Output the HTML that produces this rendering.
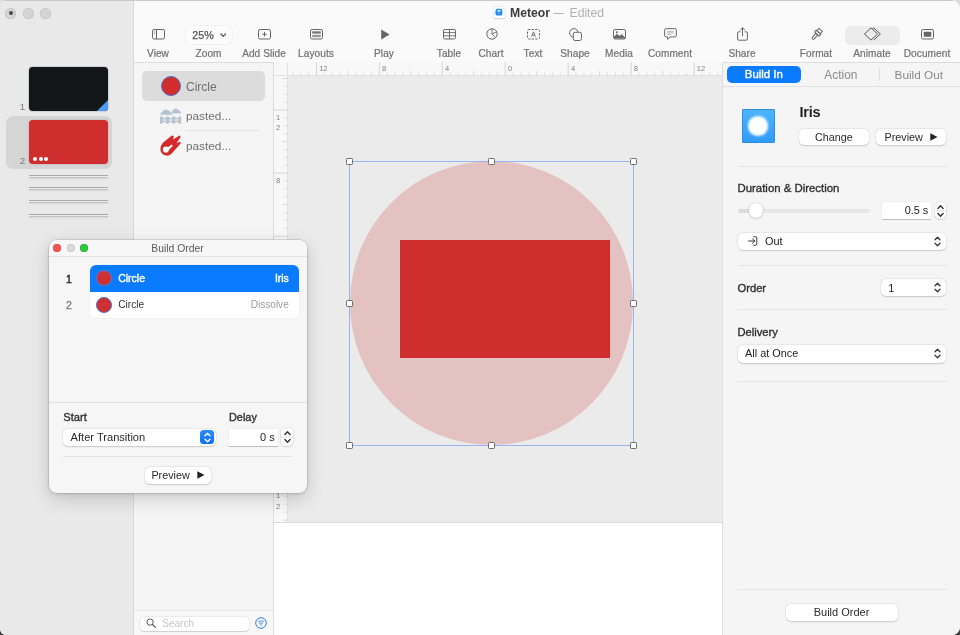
<!DOCTYPE html>
<html>
<head>
<meta charset="utf-8">
<title>Keynote</title>
<style>
*{box-sizing:border-box;margin:0;padding:0}
html,body{width:960px;height:635px;overflow:hidden;background:linear-gradient(#dedede 0,#dedede 50%,#3a3c3c 50%,#3a3c3c 100%);font-family:"Liberation Sans",sans-serif;}
#win{position:absolute;left:0;top:0;width:960px;height:635px;background:#ebebeb;border-radius:6px 9px 8px 6px;overflow:hidden;will-change:transform}
.abs{position:absolute}
.t{position:absolute;white-space:nowrap;line-height:1}
/* regions */
#nav{left:0;top:0;width:134px;height:635px;background:#e9e9e9;border-right:1px solid #d9d9d9}
#tb{left:134px;top:0;width:826px;height:63px;background:#fafafa;border-bottom:1px solid #dcdcdc}
#topline{left:0;top:0;width:960px;height:1px;background:#c9c9c9}
#objs{left:134px;top:63px;width:140px;height:572px;background:#f5f5f5;border-right:1px solid #dcdcdc}
#hr{left:274px;top:62px;width:449px;height:14px;background:#f8f8f8;border-bottom:1px solid #e2e2e2}
#vr{left:274px;top:76px;width:14px;height:447px;background:#f8f8f8;border-right:1px solid #e2e2e2}
#canvas{left:288px;top:76px;width:435px;height:447px;background:#ebebeb}
#notes{left:274px;top:522px;width:449px;height:113px;background:#fff;border-top:1px solid #dcdcdc}
#insp{left:722px;top:63px;width:238px;height:572px;background:#f5f5f5;border-left:1px solid #dedede}
.lbl{font-size:10.100px;letter-spacing:.06px;color:#707070;-webkit-text-stroke:.2px #707070;transform:translateX(-50%);top:49.100px}
.sep{position:absolute;height:1px;background:#e3e3e3}
.btn{position:absolute;background:#fff;border-radius:5px;box-shadow:0 0 0 .5px rgba(0,0,0,.05),0 .5px 1.500px rgba(0,0,0,.17);font-size:12px;color:#2a2a2a;text-align:center}
.h{position:absolute;width:6.400px;height:6.400px;background:#fff;border:1.200px solid #707070;border-radius:1.200px}
</style>
</head>
<body>
<div id="win">
  <div id="nav" class="abs"></div>
  <div id="tb" class="abs"></div>
  <div id="objs" class="abs"></div>
  <div id="hr" class="abs"></div>
  <div id="vr" class="abs"></div>
  <div id="canvas" class="abs"></div>
  <div id="notes" class="abs"></div>
  <div id="insp" class="abs"></div>
  <div id="topline" class="abs"></div>

  <!-- traffic lights (inactive) -->
  <div class="abs" style="left:5px;top:7.500px;width:11px;height:11px;border-radius:50%;background:#d4d4d4;box-shadow:inset 0 0 0 .5px #bdbdbd"></div>
  <div class="abs" style="left:8.500px;top:11px;width:4px;height:4px;border-radius:50%;background:#4a4a4a"></div>
  <div class="abs" style="left:22.500px;top:7.500px;width:11px;height:11px;border-radius:50%;background:#d4d4d4;box-shadow:inset 0 0 0 .5px #c3c3c3"></div>
  <div class="abs" style="left:40px;top:7.500px;width:11px;height:11px;border-radius:50%;background:#d4d4d4;box-shadow:inset 0 0 0 .5px #c3c3c3"></div>

  <!-- slide navigator -->
  <div class="abs" style="left:29px;top:67px;width:79px;height:44px;border-radius:4px;background:#131617;box-shadow:0 0 1.5px rgba(0,0,0,.5);overflow:hidden">
    <div class="abs" style="right:0;bottom:0;width:0;height:0;border-left:11px solid transparent;border-bottom:11px solid #4a9cf8"></div>
  </div>
  <div class="t" style="left:19.800px;top:102px;font-size:9.800px;color:#7a7a7a">1</div>
  <div class="abs" style="left:6.300px;top:116px;width:105.700px;height:52.600px;border-radius:7px;background:#d5d5d5"></div>
  <div class="abs" style="left:29px;top:120px;width:79px;height:44px;border-radius:4px;background:#cf2e2e;box-shadow:0 0 1.5px rgba(120,0,0,.4)"></div>
  <div class="t" style="left:19.800px;top:156px;font-size:9.800px;color:#7a7a7a">2</div>
  <div class="abs" style="left:33px;top:157px;width:4px;height:4px;border-radius:50%;background:#fff"></div>
  <div class="abs" style="left:38.5px;top:157px;width:4px;height:4px;border-radius:50%;background:#fff"></div>
  <div class="abs" style="left:44px;top:157px;width:4px;height:4px;border-radius:50%;background:#fff"></div>
  <div class="abs cl" style="top:174.600px"></div>
  <div class="abs cl" style="top:187.400px"></div>
  <div class="abs cl" style="top:200.400px"></div>
  <div class="abs cl" style="top:213.600px"></div>
  <style>.cl{left:29px;width:79px;height:1px;background:#a9a9a9;box-shadow:0 1px 0 #ededed,0 2px 1px rgba(0,0,0,.2),0 3px 2px rgba(0,0,0,.08)}</style>

  <!-- TOOLBAR -->

  <!-- title -->
  <svg class="abs" style="left:492px;top:4px" width="15" height="17" viewBox="0 0 15 17"><path d="M2 2.300h7.600l3.400 3.300v8.900h-11z" fill="#fff" stroke="#dedede" stroke-width=".7"/><path d="M2 14.700h11" stroke="#d2d2d2" stroke-width=".8"/><rect x="3.500" y="4.800" width="6.800" height="6.800" rx="1.900" fill="#1a86f8"/><rect x="5.200" y="6.100" width="3.400" height="1.500" rx=".3" fill="#e8f0fb"/><rect x="6.600" y="7.600" width=".6" height="2.800" fill="#cfe0f8"/></svg>
  <div class="t" style="left:510px;top:6.700px;font-size:12.200px;font-weight:bold;color:#3c3c3c">Meteor</div>
  <div class="t" style="left:554px;top:7px;font-size:12px;color:#a9a9a9;transform:scaleX(.8);transform-origin:0 0">—</div>
  <div class="t" style="left:569.500px;top:7px;font-size:12.200px;color:#b0b0b0">Edited</div>

  <!-- zoom button / animate highlight -->
  <div class="abs" style="left:185.700px;top:26px;width:46.600px;height:18.400px;border-radius:4.500px;background:#fcfcfc;box-shadow:0 0 0 .5px rgba(0,0,0,.07)"></div>
  <div class="t" style="left:192.300px;top:30.200px;font-size:10.700px;color:#555;-webkit-text-stroke:.25px #555">25%</div>
  <svg class="abs" style="left:219.700px;top:32.600px" width="6.500" height="4.600" viewBox="0 0 6.500 4.600"><path d="M.9 .9l2.350 2.500 2.350-2.500" fill="none" stroke="#606060" stroke-width="1.400" stroke-linecap="round" stroke-linejoin="round"/></svg>
  <div class="abs" style="left:845px;top:25.500px;width:54.500px;height:19.500px;border-radius:5px;background:#ececec"></div>

  <!-- icons -->
  <svg class="abs" style="left:152.0px;top:29.4px" width="13" height="10.500" viewBox="0 0 13 10.500"><rect x=".5" y=".5" width="12" height="9.500" rx="1.600" fill="none" stroke="#666" stroke-width="1"/><path d="M4.500 .5v9.500" stroke="#666" stroke-width="1"/><path d="M2 2.800h1.200M2 4.400h1.200" stroke="#666" stroke-width=".7"/></svg>
  <svg class="abs" style="left:258.0px;top:29.4px" width="13" height="10.500" viewBox="0 0 13 10.500"><rect x=".5" y=".5" width="12" height="9.500" rx="1.600" fill="none" stroke="#666" stroke-width="1"/><path d="M6.500 3v4.500M4.250 5.250h4.500" stroke="#666" stroke-width="1"/></svg>
  <svg class="abs" style="left:310.0px;top:29.4px" width="13" height="10.500" viewBox="0 0 13 10.500"><rect x=".5" y=".5" width="12" height="9.500" rx="1.600" fill="none" stroke="#666" stroke-width="1"/><rect x="2.200" y="2.300" width="8.600" height="2.300" fill="#777"/><rect x="2.200" y="5.800" width="8.600" height="2.400" fill="#999"/></svg>
  <svg class="abs" style="left:380px;top:28.9px" width="10" height="11" viewBox="0 0 10 11"><path d="M1.200 .9v9.200a.3.300 0 0 0 .45.260l7.500-4.600a.3.300 0 0 0 0-.52l-7.500-4.600a.3.300 0 0 0-.45.260z" fill="#666"/></svg>
  <svg class="abs" style="left:443.0px;top:29.4px" width="13" height="10.500" viewBox="0 0 13 10.500"><rect x=".5" y=".5" width="12" height="9.500" rx="1.600" fill="none" stroke="#666" stroke-width="1"/><path d="M.5 3.600h12M.5 6.800h12M6.500 .5v9.500" stroke="#666" stroke-width=".9"/></svg>
  <svg class="abs" style="left:485.500px;top:28.4px" width="12" height="12" viewBox="0 0 12 12"><circle cx="6" cy="6" r="5.200" fill="none" stroke="#666" stroke-width="1"/><path d="M6 .8v5.200l3.600 3.600M6 6l4.700-2.200" fill="none" stroke="#666" stroke-width=".9"/></svg>
  <svg class="abs" style="left:526.500px;top:29.4px" width="13" height="10.500" viewBox="0 0 13 10.500"><rect x=".5" y=".5" width="12" height="9.500" rx="1.600" fill="none" stroke="#666" stroke-width="1" stroke-dasharray="2.300 1.200" stroke-dashoffset="1"/><path d="M4.600 7.700l1.900-4.900 1.900 4.900M5.250 6.200h2.500" fill="none" stroke="#666" stroke-width=".9"/></svg>
  <svg class="abs" style="left:568.500px;top:27.9px" width="13" height="13" viewBox="0 0 13 13"><circle cx="4.800" cy="4.800" r="4.200" fill="none" stroke="#666" stroke-width="1"/><rect x="4.300" y="4.300" width="8.200" height="8.200" rx="1.800" fill="#fafafa" stroke="#666" stroke-width="1"/></svg>
  <svg class="abs" style="left:613.0px;top:29.4px" width="13" height="10.500" viewBox="0 0 13 10.500"><rect x=".5" y=".5" width="12" height="9.500" rx="1.600" fill="none" stroke="#666" stroke-width="1"/><path d="M.8 9.500v-1.800l3.300-3 2.400 2.200 2-1.700 3.700 3.200v1.100z" fill="#666"/><circle cx="3.800" cy="3.200" r="1" fill="#666"/></svg>
  <svg class="abs" style="left:664px;top:27.9px" width="13" height="13" viewBox="0 0 13 13"><path d="M2.300 .6h8.400a1.700 1.700 0 0 1 1.700 1.700v4.900a1.700 1.700 0 0 1-1.700 1.700h-4.500l-2.500 2.500v-2.500h-1.400a1.700 1.700 0 0 1-1.700-1.700v-4.900a1.700 1.700 0 0 1 1.700-1.700z" fill="none" stroke="#666" stroke-width="1" stroke-linejoin="round"/><path d="M3.200 3.300h6.600M3.200 4.900h6.600M3.200 6.500h3.800" stroke="#999" stroke-width=".7"/></svg>
  <svg class="abs" style="left:736.500px;top:26.9px" width="11" height="14" viewBox="0 0 11 14"><path d="M3.300 4.800h-1.500a1.200 1.200 0 0 0-1.200 1.200v6a1.200 1.200 0 0 0 1.200 1.200h7.400a1.200 1.200 0 0 0 1.200-1.200v-6a1.200 1.200 0 0 0-1.200-1.200h-1.500" fill="none" stroke="#666" stroke-width="1"/><path d="M5.500 8.800v-7.800M3.300 3l2.200-2.200 2.200 2.200" fill="none" stroke="#666" stroke-width="1" stroke-linecap="round" stroke-linejoin="round"/></svg>
  <svg class="abs" style="left:809px;top:26.9px" width="15" height="15" viewBox="0 0 15 15"><g transform="rotate(42 7.500 7.500)" fill="none" stroke="#666" stroke-width="1" stroke-linejoin="round"><path d="M5.200 1.200h4.600v3.300h-4.600z"/><path d="M4.300 4.500h6.400v2.500h-6.400z"/><path d="M6.300 7h2.400v5.200a1.200 1.200 0 0 1-2.400 0z"/></g></svg>
  <svg class="abs" style="left:862.500px;top:26.9px" width="20" height="14" viewBox="0 0 20 14"><path d="M10.800 1l6.600 6-6.600 6" fill="none" stroke="#555" stroke-width="1" stroke-linejoin="round"/><path d="M9.300 2.300l1.500-1.300" fill="none" stroke="#555" stroke-width="1"/><path d="M8 .9l6.500 6.100-6.500 6.100-6.500-6.100z" fill="#ececec" stroke="#555" stroke-width="1" stroke-linejoin="round"/></svg>
  <svg class="abs" style="left:921.0px;top:29.4px" width="13" height="10.500" viewBox="0 0 13 10.500"><rect x=".5" y=".5" width="12" height="9.500" rx="1.600" fill="none" stroke="#666" stroke-width="1"/><rect x="2.800" y="2.800" width="7.400" height="4.900" rx=".5" fill="#666"/></svg>

  <!-- labels -->
  <div class="t lbl" style="left:158px">View</div>
  <div class="t lbl" style="left:208.500px">Zoom</div>
  <div class="t lbl" style="left:264px">Add Slide</div>
  <div class="t lbl" style="left:316px">Layouts</div>
  <div class="t lbl" style="left:384px">Play</div>
  <div class="t lbl" style="left:449px">Table</div>
  <div class="t lbl" style="left:491px">Chart</div>
  <div class="t lbl" style="left:533px">Text</div>
  <div class="t lbl" style="left:575px">Shape</div>
  <div class="t lbl" style="left:619px">Media</div>
  <div class="t lbl" style="left:670px">Comment</div>
  <div class="t lbl" style="left:742px">Share</div>
  <div class="t lbl" style="left:816px">Format</div>
  <div class="t lbl" style="left:872px">Animate</div>
  <div class="t lbl" style="left:927px">Document</div>


  <!-- OBJECT LIST -->
  <div class="abs" style="left:142px;top:71px;width:123px;height:30px;border-radius:5px;background:#dcdcdc"></div>
  <div class="abs" style="left:161px;top:76px;width:20px;height:20px;border-radius:50%;background:#d02d2d;border:1px solid #4f6dcf"></div>
  <div class="t" style="left:186px;top:80.700px;font-size:12px;color:#707070">Circle</div>
  <svg class="abs" style="left:160px;top:107.500px" width="22" height="16" viewBox="0 0 22 16"><g fill="#b7c3d0"><path d="M0 6.700c1.500-2.600 3.600-4.900 6-5.200 2.600.3 4.700 2.600 6.700 5.200z"/><path d="M11.300 4.600c1.200-2.400 2.600-3.900 4.400-4.100 2.200.2 4 2 5.500 4.600v.4h-8.400z"/><rect x="0" y="8.500" width="2.800" height="7.200"/><rect x="6.100" y="8.500" width="2.800" height="7.200"/><rect x="12.300" y="8.500" width="2.800" height="7.200"/><rect x="18.400" y="8.500" width="2.800" height="7.200"/><rect x="0" y="9.800" width="21" height="1.600"/><rect x="0" y="12.700" width="21" height="1.600"/></g></svg>
  <div class="t" style="left:186px;top:110.500px;font-size:11.800px;color:#707070">pasted...</div>
  <div class="sep" style="left:186px;top:130px;width:73px;background:#e2e2e2"></div>
  <svg class="abs" style="left:160.400px;top:135px" width="21" height="21" viewBox="0 0 21 21"><path d="M.4 13.800C.5 10.500 2.300 8 5 6L11.300 .9Q12.600 -.1 13.600 1Q14 1.600 13.600 2.600L13.100 4.400L18.600 .9Q19.800 .1 20.400 1.200Q20.700 2 20.100 2.900L16.400 8.200L19.200 6.900Q20.500 6.500 20.700 7.600Q20.800 8.400 20 9.300L12 18.300C10.500 19.900 8.600 20.800 6.400 20.600C2.900 20.300 .3 17.400 .4 13.800Z" fill="#d42a2c"/><circle cx="5.900" cy="14.600" r="3.100" fill="#f5f5f5"/><path d="M7.600 12.600L11.600 9.500L12.900 10.800L9.100 14.700z" fill="#f5f5f5"/><circle cx="9.200" cy="10.500" r=".75" fill="#d42a2c"/></svg>
  <div class="t" style="left:186px;top:140.500px;font-size:11.800px;color:#707070">pasted...</div>
  <div class="sep" style="left:134px;top:610px;width:139px;background:#e6e6e6"></div>
  <div class="abs" style="left:134px;top:611px;width:139px;height:24px;background:#f8f8f8"></div>
  <div class="abs" style="left:140px;top:616.500px;width:109px;height:14.300px;border-radius:4px;background:#fff;box-shadow:0 0 0 .5px rgba(0,0,0,.07),0 .5px 1px rgba(0,0,0,.14)"></div>
  <svg class="abs" style="left:145.500px;top:618.300px" width="10.500" height="10.500" viewBox="0 0 11 11"><circle cx="4.300" cy="4.300" r="3.300" fill="none" stroke="#4f4f4f" stroke-width="1"/><path d="M6.800 6.800l3 3" stroke="#4f4f4f" stroke-width="1.150" stroke-linecap="round"/></svg>
  <div class="t" style="left:162.300px;top:618.700px;font-size:10px;color:#c6c6c6">Search</div>
  <svg class="abs" style="left:255px;top:617px" width="12" height="12" viewBox="0 0 12 12"><circle cx="6" cy="6" r="5.300" fill="none" stroke="#2f7de0" stroke-width="1"/><path d="M3 4.200h6M3.900 6.100h4.200M4.900 8h2.200" stroke="#2f7de0" stroke-width=".8"/></svg>

  <!-- RULERS -->
  <div class="abs" style="left:287px;top:63px;width:1px;height:13px;background:#e2e2e2"></div>
  <svg class="abs" style="left:274px;top:62px" width="449" height="14" viewBox="0 0 449 14"><path d="M18.83 10.700v2.800M26.69 10.700v2.800M34.56 10.700v2.800M50.30 10.700v2.800M58.17 10.700v2.800M66.03 10.700v2.800M73.90 9v4.500M81.77 10.700v2.800M89.63 10.700v2.800M97.50 10.700v2.800M113.24 10.700v2.800M121.11 10.700v2.800M128.97 10.700v2.800M136.84 9v4.500M144.71 10.700v2.800M152.57 10.700v2.800M160.44 10.700v2.800M176.18 10.700v2.800M184.05 10.700v2.800M191.91 10.700v2.800M199.78 9v4.500M207.65 10.700v2.800M215.51 10.700v2.800M223.38 10.700v2.800M239.12 10.700v2.800M246.99 10.700v2.800M254.85 10.700v2.800M262.72 9v4.500M270.59 10.700v2.800M278.46 10.700v2.800M286.32 10.700v2.800M302.06 10.700v2.800M309.92 10.700v2.800M317.79 10.700v2.800M325.66 9v4.500M333.53 10.700v2.800M341.39 10.700v2.800M349.26 10.700v2.800M365.00 10.700v2.800M372.87 10.700v2.800M380.73 10.700v2.800M388.60 9v4.500M396.47 10.700v2.800M404.34 10.700v2.800M412.20 10.700v2.800M427.94 10.700v2.800M435.81 10.700v2.800M443.67 10.700v2.800" stroke="#d9d9d9" stroke-width="1" fill="none"/><path d="M42.43 0v13.500M105.37 0v13.500M168.31 0v13.500M231.25 0v13.500M294.19 0v13.500M357.13 0v13.500M420.07 0v13.500" stroke="#d6d6d6" stroke-width="1" fill="none"/><g font-family="Liberation Sans, sans-serif" font-size="7.600" fill="#828282"><text x="45.13" y="8.700">12</text><text x="108.07" y="8.700">8</text><text x="171.01" y="8.700">4</text><text x="233.95" y="8.700">0</text><text x="296.89" y="8.700">4</text><text x="359.83" y="8.700">8</text><text x="422.77" y="8.700">12</text></g></svg>
  <svg class="abs" style="left:274px;top:76px" width="14" height="447" viewBox="0 0 14 447"><path d="M8.500 2.49h5M10.700 10.38h2.800M10.700 18.26h2.800M10.700 26.15h2.800M10.700 41.92h2.800M10.700 49.81h2.800M10.700 57.69h2.800M8.500 65.58h5M10.700 73.47h2.800M10.700 81.35h2.800M10.700 89.24h2.800M10.700 105.01h2.800M10.700 112.90h2.800M10.700 120.78h2.800M8.500 128.67h5M10.700 136.55h2.800M10.700 144.44h2.800M10.700 152.33h2.800M10.700 168.10h2.800M10.700 175.98h2.800M10.700 183.87h2.800M8.500 191.76h5M10.700 199.64h2.800M10.700 207.53h2.800M10.700 215.41h2.800M10.700 231.19h2.800M10.700 239.07h2.800M10.700 246.96h2.800M8.500 254.84h5M10.700 262.73h2.800M10.700 270.62h2.800M10.700 278.50h2.800M10.700 294.27h2.800M10.700 302.16h2.800M10.700 310.05h2.800M8.500 317.93h5M10.700 325.82h2.800M10.700 333.70h2.800M10.700 341.59h2.800M10.700 357.36h2.800M10.700 365.25h2.800M10.700 373.13h2.800M8.500 381.02h5M10.700 388.91h2.800M10.700 396.79h2.800M10.700 404.68h2.800M10.700 420.45h2.800M10.700 428.34h2.800M10.700 436.22h2.800M8.500 444.11h5" stroke="#d9d9d9" stroke-width="1" fill="none"/><path d="M0 34.04h13.500M0 97.12h13.500M0 160.21h13.500M0 223.30h13.500M0 286.39h13.500M0 349.48h13.500M0 412.56h13.500" stroke="#d6d6d6" stroke-width="1" fill="none"/><g font-family="Liberation Sans, sans-serif" font-size="7.600" fill="#828282"><text x="2" y="43.94">1</text><text x="2" y="54.14">2</text><text x="2" y="107.02">8</text><text x="2" y="170.11">4</text><text x="2" y="233.20">0</text><text x="2" y="296.29">4</text><text x="2" y="359.38">8</text><text x="2" y="422.46">1</text><text x="2" y="432.66">2</text></g></svg>

  <!-- CANVAS CONTENT -->
  <div class="abs" style="left:349.500px;top:161.400px;width:283.800px;height:283.800px;border-radius:50%;background:#e5c2c2"></div>
  <div class="abs" style="left:400px;top:239.900px;width:210.300px;height:118.100px;background:#cf2e2e"></div>
  <div class="abs" style="left:348.950px;top:160.900px;width:284.900px;height:284.900px;border:1px solid #98b3f6"></div>
  <div class="h" style="left:346.25px;top:158.15px"></div>
  <div class="h" style="left:488.25px;top:158.15px"></div>
  <div class="h" style="left:630.25px;top:158.15px"></div>
  <div class="h" style="left:346.25px;top:300.15px"></div>
  <div class="h" style="left:630.25px;top:300.15px"></div>
  <div class="h" style="left:346.25px;top:442.15px"></div>
  <div class="h" style="left:488.25px;top:442.15px"></div>
  <div class="h" style="left:630.25px;top:442.15px"></div>


  <!-- INSPECTOR -->
  <div class="sep" style="left:723px;top:86px;width:237px;background:#e1e1e1"></div>
  <div class="abs" style="left:727px;top:66px;width:73.500px;height:17px;border-radius:5px;background:#0a7aff"></div>
  <div class="t" style="left:763.800px;top:69.300px;font-size:11.400px;-webkit-text-stroke:.4px #fff;color:#fff;transform:translateX(-50%)">Build In</div>
  <div class="t" style="left:840.900px;top:70px;font-size:11.900px;color:#8a8a8a;transform:translateX(-50%)">Action</div>
  <div class="abs" style="left:879px;top:69px;width:1px;height:11.500px;background:#dedede"></div>
  <div class="t" style="left:918.800px;top:70px;font-size:11.800px;color:#8a8a8a;transform:translateX(-50%)">Build Out</div>

  <div class="abs" style="left:742px;top:109.300px;width:33px;height:33.600px;background:linear-gradient(#4eb4fd,#309bf9);border:1px solid #2b8ce9;border-radius:1px;overflow:hidden"><div class="abs" style="left:5.400px;top:5.700px;width:19.600px;height:19.600px;border-radius:50%;background:#fff;filter:blur(1.300px)"></div></div>
  <div class="t" style="left:799.500px;top:105px;font-size:14.500px;font-weight:bold;color:#222;letter-spacing:-.2px">Iris</div>
  <div class="btn" style="left:799px;top:128.800px;width:70px;height:16.700px"></div>
  <div class="t" style="left:833.800px;top:131.600px;font-size:10.800px;color:#2a2a2a;transform:translateX(-50%)">Change</div>
  <div class="btn" style="left:876px;top:128.800px;width:70px;height:16.700px"></div>
  <div class="t" style="left:884.500px;top:131.600px;font-size:10.800px;color:#2a2a2a">Preview</div>
  <svg class="abs" style="left:930px;top:132.800px" width="8" height="8" viewBox="0 0 8 8"><path d="M.3 .3l7.200 3.700-7.200 3.700z" fill="#222"/></svg>
  <div class="sep" style="left:737.500px;top:165.500px;width:209px"></div>

  <div class="t" style="left:737.500px;top:182.500px;font-size:11.400px;-webkit-text-stroke:.35px #303030;color:#303030">Duration &amp; Direction</div>
  <div class="abs" style="left:737.500px;top:209px;width:132px;height:3.500px;border-radius:2px;background:#e8e8e8;box-shadow:inset 0 .5px .5px rgba(0,0,0,.04)"></div>
  <div class="abs" style="left:737.500px;top:209px;width:16px;height:3.500px;border-radius:2px;background:#dcdcdc"></div>
  <div class="abs" style="left:748.900px;top:203.400px;width:14.600px;height:14.600px;border-radius:50%;background:#fff;box-shadow:0 0 0 .5px rgba(0,0,0,.07),0 .5px 2px rgba(0,0,0,.22)"></div>
  <div class="abs" style="left:882px;top:202px;width:48.800px;height:17px;background:#fff;box-shadow:0 0 0 .5px rgba(0,0,0,.06),0 .8px .5px rgba(0,0,0,.2)"></div>
  <div class="t" style="left:928.300px;top:204.800px;font-size:10.900px;color:#222;transform:translateX(-100%)">0.5 s</div>
  <div class="abs" style="left:934.7px;top:201.7px;width:11.4px;height:17.6px;border-radius:4.500px;background:#fff;box-shadow:0 0 0 .5px rgba(0,0,0,.08),0 .5px 1.500px rgba(0,0,0,.2)"></div>
  <div class="abs" style="left:934.7px;top:210.1px;width:11.4px;height:.8px;background:#e6e6e6"></div>
  <svg class="abs" style="left:936.9px;top:203.7px" width="7" height="14" viewBox="0 0 7 14"><path d="M.9 4.500l2.600-2.700 2.600 2.700M.9 9.500l2.600 2.700 2.600-2.700" fill="none" stroke="#2e2e2e" stroke-width="1.350" stroke-linecap="round" stroke-linejoin="round"/></svg>
  <div class="btn" style="left:737.500px;top:232.500px;width:208.800px;height:17px"></div>
  <svg class="abs" style="left:748px;top:236.200px" width="10" height="10" viewBox="0 0 10 10"><path d="M.6 5h6M4.500 2.700l2.300 2.300-2.300 2.300" fill="none" stroke="#333" stroke-width="1" stroke-linecap="round" stroke-linejoin="round"/><path d="M5.400 .8h2.400a1 1 0 0 1 1 1v6.400a1 1 0 0 1-1 1h-2.400" fill="none" stroke="#333" stroke-width="1"/></svg>
  <div class="t" style="left:765px;top:235.700px;font-size:10.900px;color:#222">Out</div>
  <svg class="abs" style="left:934.2px;top:235.5px" width="7" height="11" viewBox="0 0 7 11"><path d="M1 3.800l2.500-2.600 2.500 2.600M1 7.200l2.500 2.600 2.500-2.600" fill="none" stroke="#3a3a3a" stroke-width="1.350" stroke-linecap="round" stroke-linejoin="round"/></svg>
  <div class="sep" style="left:737.500px;top:265px;width:209px"></div>

  <div class="t" style="left:737.500px;top:282.800px;font-size:11.200px;-webkit-text-stroke:.35px #303030;color:#303030">Order</div>
  <div class="btn" style="left:881px;top:279.300px;width:65.300px;height:17px"></div>
  <div class="t" style="left:888.300px;top:282.500px;font-size:10.900px;color:#222">1</div>
  <svg class="abs" style="left:934.2px;top:282.3px" width="7" height="11" viewBox="0 0 7 11"><path d="M1 3.800l2.500-2.600 2.500 2.600M1 7.200l2.500 2.600 2.500-2.600" fill="none" stroke="#3a3a3a" stroke-width="1.350" stroke-linecap="round" stroke-linejoin="round"/></svg>
  <div class="sep" style="left:737.500px;top:309px;width:209px"></div>

  <div class="t" style="left:737.500px;top:327.300px;font-size:11.200px;-webkit-text-stroke:.35px #303030;color:#303030">Delivery</div>
  <div class="btn" style="left:737.500px;top:345px;width:208.800px;height:17.500px"></div>
  <div class="t" style="left:745px;top:348.300px;font-size:10.900px;color:#222">All at Once</div>
  <svg class="abs" style="left:934.2px;top:348.3px" width="7" height="11" viewBox="0 0 7 11"><path d="M1 3.800l2.500-2.600 2.500 2.600M1 7.200l2.500 2.600 2.500-2.600" fill="none" stroke="#3a3a3a" stroke-width="1.350" stroke-linecap="round" stroke-linejoin="round"/></svg>
  <div class="sep" style="left:737.500px;top:381px;width:209px"></div>

  <div class="sep" style="left:737.500px;top:588.500px;width:209px"></div>
  <div class="btn" style="left:785.500px;top:604px;width:112.500px;height:17.300px"></div>
  <div class="t" style="left:841.500px;top:607px;font-size:11px;color:#2a2a2a;transform:translateX(-50%)">Build Order</div>


  <!-- BUILD ORDER WINDOW -->
  <div class="abs" style="left:49px;top:240px;width:258px;height:252.500px;border-radius:8px;background:#f6f6f6;box-shadow:0 0 0 .5px rgba(0,0,0,.17),0 6px 18px rgba(0,0,0,.17),0 1px 4px rgba(0,0,0,.10)"></div>
  <div class="abs" style="left:49px;top:240px;width:258px;height:17px;border-radius:8px 8px 0 0;background:#f7f7f7;border-bottom:1px solid #e2e2e2"></div>
  <div class="abs" style="left:53.400px;top:244.300px;width:8px;height:8px;border-radius:50%;background:#f5564f;box-shadow:inset 0 0 0 .5px rgba(180,40,30,.5)"></div>
  <div class="abs" style="left:66.600px;top:244.300px;width:8px;height:8px;border-radius:50%;background:#d8d8d8;box-shadow:inset 0 0 0 .5px rgba(0,0,0,.1)"></div>
  <div class="abs" style="left:79.800px;top:244.300px;width:8px;height:8px;border-radius:50%;background:#2cc841;box-shadow:inset 0 0 0 .5px rgba(20,130,30,.5)"></div>
  <div class="t" style="left:177.500px;top:243.800px;font-size:10.400px;color:#5a5a5a;transform:translateX(-50%)">Build Order</div>

  <div class="abs" style="left:89.600px;top:264.700px;width:209px;height:53.300px;border-radius:6px;background:#fff;box-shadow:0 0 0 .5px rgba(0,0,0,.04);overflow:hidden"><div class="abs" style="left:0;top:0;width:209px;height:27px;background:#0a7aff"></div></div>
  <div class="t" style="left:69px;top:273.600px;font-size:10.500px;-webkit-text-stroke:.4px #222;color:#222;transform:translateX(-50%)">1</div>
  <div class="t" style="left:69px;top:299.900px;font-size:10.500px;-webkit-text-stroke:.3px #7c7c7c;color:#7c7c7c;transform:translateX(-50%)">2</div>
  <div class="abs" style="left:96.300px;top:270.200px;width:15.800px;height:15.800px;border-radius:50%;background:#cf3033;border:.8px solid #5a77d8"></div>
  <div class="abs" style="left:96.300px;top:296.800px;width:15.800px;height:15.800px;border-radius:50%;background:#cf3033;border:1px solid #4f6dcf"></div>
  <div class="t" style="left:118.200px;top:273px;font-size:10.500px;-webkit-text-stroke:.4px #fff;color:#fff">Circle</div>
  <div class="t" style="left:288.800px;top:273.700px;font-size:10.400px;-webkit-text-stroke:.4px #fff;color:#fff;transform:translateX(-100%)">Iris</div>
  <div class="t" style="left:118.200px;top:300.300px;font-size:10.200px;color:#333">Circle</div>
  <div class="t" style="left:288.800px;top:300.300px;font-size:10.100px;color:#9b9b9b;transform:translateX(-100%)">Dissolve</div>

  <div class="sep" style="left:49px;top:402px;width:258px;background:#e0e0e0"></div>
  <div class="t" style="left:63.300px;top:412px;font-size:11.200px;-webkit-text-stroke:.35px #303030;color:#303030">Start</div>
  <div class="t" style="left:229px;top:412px;font-size:10.900px;-webkit-text-stroke:.35px #303030;color:#303030">Delay</div>
  <div class="btn" style="left:62.800px;top:428.500px;width:153.600px;height:17.500px"></div>
  <div class="t" style="left:70.600px;top:431.700px;font-size:11.100px;color:#2a2a2a">After Transition</div>
  <div class="abs" style="left:200.400px;top:430px;width:14px;height:14.300px;border-radius:3.500px;background:linear-gradient(#2a8bfb,#0f6ff2)"></div>
  <svg class="abs" style="left:203.9px;top:431.7px" width="7" height="11" viewBox="0 0 7 11"><path d="M1 3.800l2.500-2.600 2.500 2.600M1 7.200l2.500 2.600 2.500-2.600" fill="none" stroke="#fff" stroke-width="1.350" stroke-linecap="round" stroke-linejoin="round"/></svg>
  <div class="abs" style="left:228.700px;top:428.500px;width:49px;height:17.500px;background:#fff;box-shadow:0 0 0 .5px rgba(0,0,0,.06),0 .8px .5px rgba(0,0,0,.2)"></div>
  <div class="t" style="left:274.800px;top:431.700px;font-size:11px;color:#222;transform:translateX(-100%)">0 s</div>
  <div class="abs" style="left:281.3px;top:428.4px;width:11.4px;height:17.6px;border-radius:4.500px;background:#fff;box-shadow:0 0 0 .5px rgba(0,0,0,.08),0 .5px 1.500px rgba(0,0,0,.2)"></div>
  <div class="abs" style="left:281.3px;top:436.8px;width:11.4px;height:.8px;background:#e6e6e6"></div>
  <svg class="abs" style="left:283.5px;top:430.4px" width="7" height="14" viewBox="0 0 7 14"><path d="M.9 4.500l2.600-2.700 2.600 2.700M.9 9.500l2.600 2.700 2.600-2.700" fill="none" stroke="#2e2e2e" stroke-width="1.350" stroke-linecap="round" stroke-linejoin="round"/></svg>
  <div class="sep" style="left:63.300px;top:456px;width:229px"></div>
  <div class="btn" style="left:145px;top:466.500px;width:65.600px;height:17.500px"></div>
  <div class="t" style="left:151.400px;top:469.500px;font-size:10.800px;color:#2a2a2a">Preview</div>
  <svg class="abs" style="left:196.800px;top:470.800px" width="8" height="8" viewBox="0 0 8 8"><path d="M.3 .3l7.200 3.700-7.200 3.700z" fill="#222"/></svg>
</div>
</body>
</html>
